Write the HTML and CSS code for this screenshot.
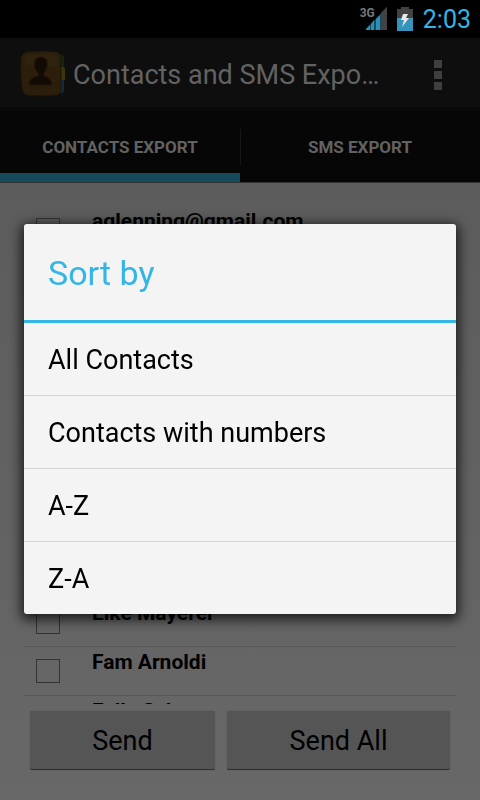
FILE: index.html
```html
<!DOCTYPE html>
<html lang="en">
    <head>
        <meta charset="utf-8">
        <title>Contacts and SMS Expo…</title>
        <meta name="viewport" content="width=device-width, initial-scale=1.0">
        <link rel="stylesheet" href="styles.css">
    </head>
    <body>
        <div class="screen">
            <div class="status-bar">
                <div class="signal">
                    <span class="network">3G</span>
                    <svg class="signal-bars" width="22" height="24" viewBox="0 0 22 24">
                        <path d="M0 23 22 0V23Z" fill="#15495e"/>
                        <path d="M1 23V22L5 18V23ZM6 23V17L9 13V23ZM11 23V12L15 8V23Z" fill="#2d8fb5"/>
                        <path d="M16 23V6L22 0V23Z" fill="#424242"/>
                    </svg>
                </div>
                <svg class="battery" width="16" height="24" viewBox="0 0 16 24">
                    <path d="M4 0H12V2H16V12H0V2H4Z" fill="#424242"/>
                    <path d="M0 11H16V24H0Z" fill="#3494bb"/>
                    <path d="M6 7H11L9 11H12L5 20 7 13H4Z" fill="#e8e8e8"/>
                </svg>
                <span class="clock">2:03</span>
            </div>
            <div class="action-bar">
                <svg class="app-icon" width="48" height="48" viewBox="0 1 48 48">
                    <rect x="35" y="5" width="9" height="14" rx="3" fill="#14260b"/>
                    <rect x="36" y="17" width="9" height="14" rx="2" fill="#3c360d"/>
                    <rect x="35" y="29" width="9" height="14" rx="3" fill="#0f2c40"/>
                    <path d="M7 2Q22 0 36 2 41 3 41 8V38Q41 44 37 45 22 47 7 45 3 44 2 38 0 23 1 8 2 3 7 2Z" fill="#2b1f0c" stroke="#1c1408"/>
                    <path d="M5 6Q21 2 38 6V16Q21 20 4 14Z" fill="#2f230f"/>
                    <path d="M21 7C12 7 13 18 18 23V26C13 27 9 29 9 35H32C31 29 28 27 24 26V23C29 17 29 7 21 7Z" fill="#120a04" stroke="#241707"/>
                </svg>
                <h1 class="title">Contacts and SMS Expo…</h1>
                <button type="button" class="overflow" aria-label="More options">
                    <span class="dot"></span>
                    <span class="dot"></span>
                    <span class="dot"></span>
                </button>
            </div>
            <div class="tabs">
                <button type="button" class="tab tab-selected">CONTACTS EXPORT</button>
                <button type="button" class="tab">SMS EXPORT</button>
            </div>
            <ul class="contacts">
                <li><label class="contact"><input type="checkbox" class="check">aglenning@gmail.com</label></li>
                <li class="contact"></li>
                <li class="contact"></li>
                <li class="contact"></li>
                <li class="contact"></li>
                <li class="contact"></li>
                <li class="contact"></li>
                <li class="contact"></li>
                <li><label class="contact"><input type="checkbox" class="check">Elke Mayerer</label></li>
                <li><label class="contact"><input type="checkbox" class="check">Fam Arnoldi</label></li>
                <li><label class="contact"><input type="checkbox" class="check">Fella Scho</label></li>
            </ul>
            <div class="footer">
                <button type="button" class="send">Send</button>
                <button type="button" class="send">Send All</button>
            </div>
        </div>
        <div class="overlay">
            <div class="dialog" role="dialog" aria-labelledby="sort-title">
                <h2 class="dialog-title" id="sort-title">Sort by</h2>
                <button type="button" class="option">All Contacts</button>
                <button type="button" class="option">Contacts with numbers</button>
                <button type="button" class="option">A-Z</button>
                <button type="button" class="option">Z-A</button>
            </div>
        </div>
    </body>
</html>
```

FILE: styles.css
```css
* {
    box-sizing: border-box;
}
body {
    margin: 0;
    font-family: Roboto, "Noto Sans", sans-serif;
    color: #000;
}
button {
    margin: 0;
    padding: 0;
    border: 0;
    background: none;
    font-family: inherit;
    color: inherit;
}
.screen {
    display: flex;
    flex-direction: column;
    height: 100vh;
    background: linear-gradient(#5c5c5c 180px, #686868);
}
.status-bar {
    display: flex;
    flex: none;
    align-items: center;
    justify-content: flex-end;
    gap: 10px;
    height: 38px;
    padding-right: 9px;
    background-color: #000;
}
.signal {
    display: flex;
    align-items: flex-start;
}
.network {
    margin-right: -10px;
    font-size: 12px;
    font-weight: 700;
    line-height: 12px;
    color: #777;
}
.clock {
    padding-top: 2px;
    font-size: 25px;
    line-height: 30px;
    color: #33b5e5;
}
.action-bar {
    display: flex;
    flex: none;
    align-items: center;
    height: 73px;
    padding: 0 24px 0 20px;
    background: linear-gradient(#0e0e0e 69px, #0a0a0a 69px);
}
.app-icon {
    flex: none;
}
.title {
    flex: 1;
    margin: 0 0 0 5px;
    font-size: 27px;
    font-weight: 400;
    color: #626262;
    white-space: nowrap;
}
.overflow {
    display: grid;
    gap: 3px;
    padding: 0 14px;
}
.dot {
    width: 8px;
    height: 8px;
    background-color: #3f3f3f;
}
.tabs {
    display: grid;
    flex: none;
    grid-template-columns: 1fr 1fr;
    height: 72px;
    background: linear-gradient(#161616, #161616) center 18px / 1px 36px no-repeat #060606;
    border-bottom: 1px solid #333;
}
.tab {
    padding-top: 9px;
    border-bottom: 9px solid transparent;
    font-size: 17px;
    font-weight: 700;
    color: #626262;
}
.tab-selected {
    border-color: #15495e;
}
.contacts {
    flex: 1;
    min-height: 0;
    margin: 0 24px;
    padding: 23px 0 0;
    overflow: hidden;
    list-style: none;
}
.contact {
    display: flex;
    gap: 32px;
    height: 49px;
    padding: 0 12px;
    border-bottom: 1px solid #585858;
    font-size: 21px;
    font-weight: 700;
    line-height: 30px;
}
.check {
    flex: none;
    width: 24px;
    height: 24px;
    margin: 12px 0 0;
    appearance: none;
    border: 1px solid #333;
}
.footer {
    display: grid;
    flex: none;
    grid-template-columns: 185fr 223fr;
    gap: 12px;
    padding: 7px 30px 30px;
}
.send {
    height: 59px;
    padding-top: 2px;
    border-bottom: 1px solid #303030;
    border-radius: 2px;
    background-color: #555;
    font-size: 27px;
    box-shadow: 0 0 1px #444;
}
.overlay {
    position: fixed;
    inset: 0;
    display: flex;
    flex-direction: column;
    justify-content: center;
    padding: 38px 24px 0;
}
.dialog {
    border-radius: 3px;
    background-color: #f4f4f4;
    box-shadow: 0 3px 12px 3px rgba(0, 0, 0, 0.7);
}
.dialog-title {
    margin: 0;
    padding: 2px 24px 0;
    border-bottom: 3px solid #33b5e5;
    font-size: 34px;
    font-weight: 400;
    line-height: 94px;
    color: #33b5e5;
}
.option {
    display: block;
    width: 100%;
    height: 73px;
    padding: 2px 24px 0;
    border-bottom: 1px solid #d5d5d5;
    font-size: 27px;
    text-align: left;
}
.option:last-child {
    height: 72px;
    border-bottom: 0;
}
```
